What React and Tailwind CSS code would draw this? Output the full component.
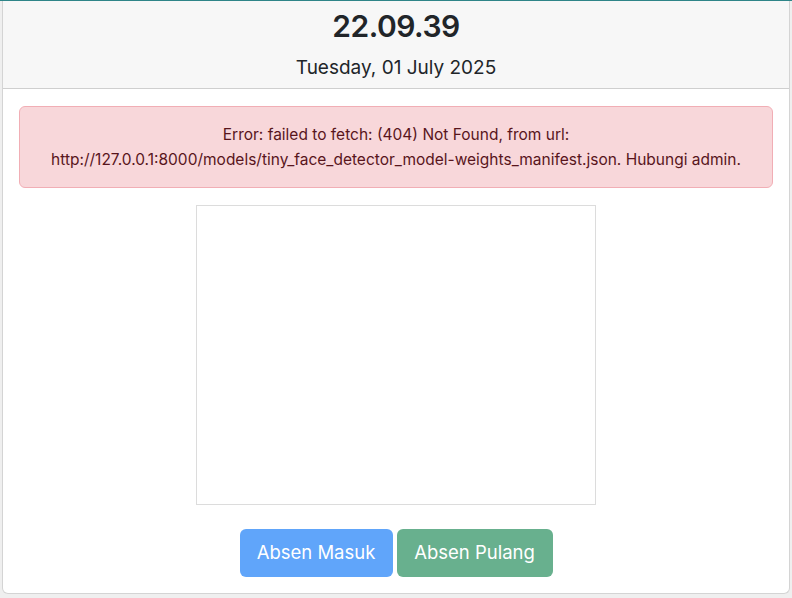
export default function App() {
  return (
    <div className="min-h-[598px] w-[792px] bg-[#efefef] border-t border-[#2e8588]" style={{ fontFamily: "Inter, 'Noto Sans', sans-serif" }}>
      <div className="ml-[2px] w-[788px] h-[593px] bg-white border border-[#d4d4d4] border-t-0 rounded-b-[6px] flex flex-col overflow-hidden">
        <div className="h-[88px] bg-[#f7f7f7] border-b border-[#cfcfcf] flex flex-col items-center">
          <div className="mt-[5px] text-[30px] leading-[40px] font-semibold text-[#212529] tracking-[-0.5px]">22.09.39</div>
          <div className="mt-[10px] text-[19px] leading-[24px] text-[#212529]">Tuesday, 01 July 2025</div>
        </div>
        <div className="px-[16px] pt-[17px] flex flex-col items-center">
          <div className="w-full h-[82px] bg-[#f8d7da] border border-[#f1aeb5] rounded-[6px] flex flex-col items-center justify-center text-[15.5px] leading-[25px] text-[#58151c]">
            <div>Error: failed to fetch: (404) Not Found, from url:</div>
            <div>http://127.0.0.1:8000/models/tiny_face_detector_model-weights_manifest.json. Hubungi admin.</div>
          </div>
          <div className="mt-[17px] w-[400px] h-[300px] border border-[#dcdcdc] bg-white"></div>
          <div className="mt-[24px] flex gap-[4px]">
            <button className="h-[48px] w-[153px] rounded-[6px] bg-[#60a5fa] text-white text-[18.5px]">Absen Masuk</button>
            <button className="h-[48px] w-[156px] rounded-[6px] bg-[#68b08e] text-white text-[18.5px]">Absen Pulang</button>
          </div>
        </div>
      </div>
    </div>
  );
}
